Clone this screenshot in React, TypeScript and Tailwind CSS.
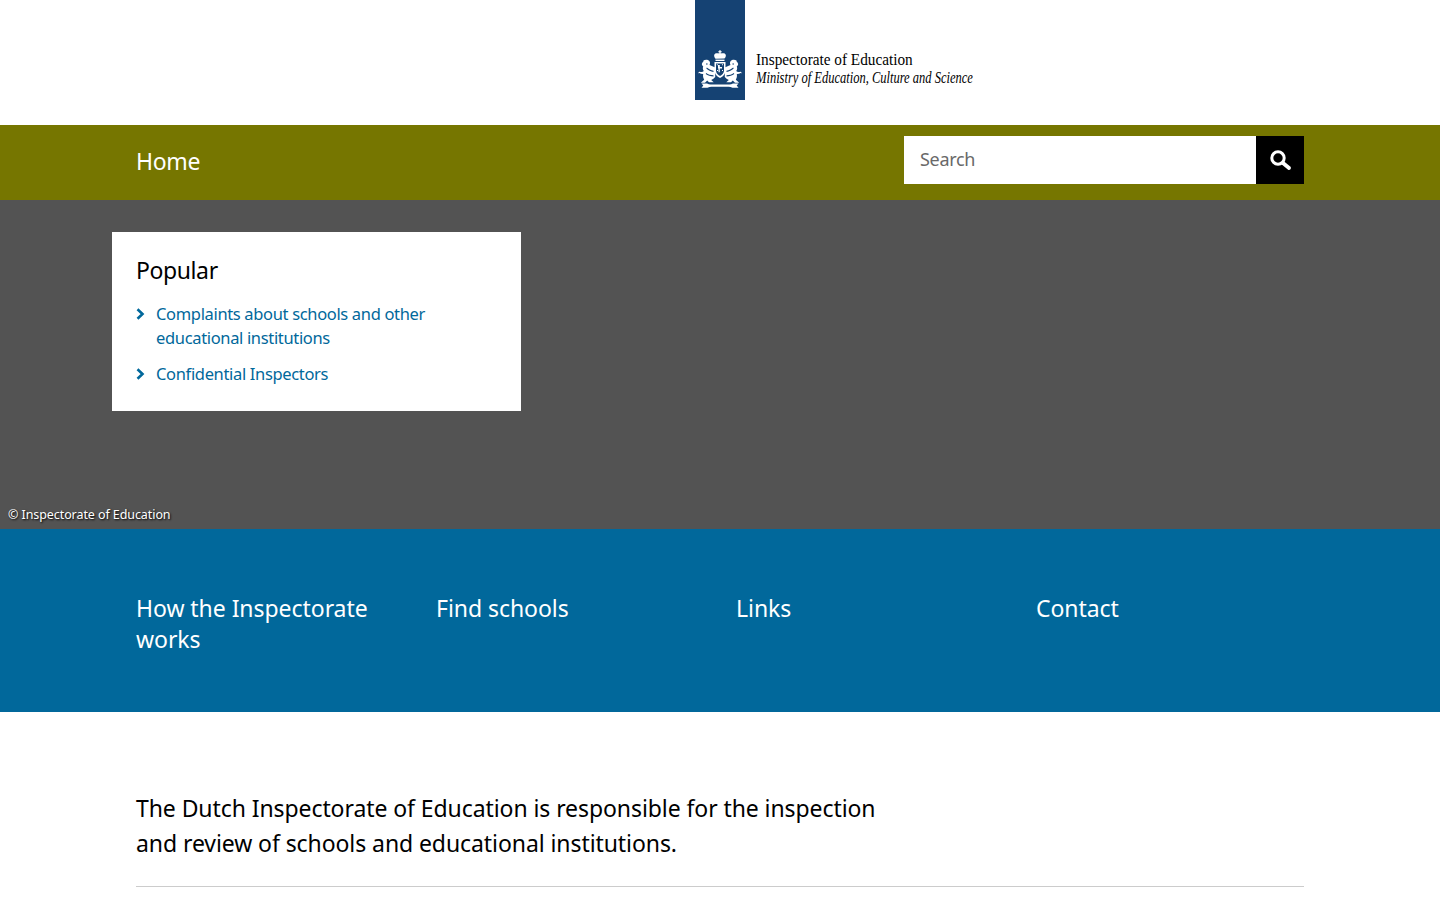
const sans = { fontFamily: '"Noto Sans", sans-serif' }

function Lion() {
  return (
    <>
      <path d="M5.500 10.500c1.800-1.200 4.500-1 5.800.5 1 1.200.9 2.700.2 3.900 2 .8 3.900 1.700 5.700 2.600v9.500c-1 1.300-2.400 2.300-4 3l2.500 2.200H11l-1.800-1.700L7 32.700H2.800l3.400-3c-1.100-1.800-1.400-3.700-1-5.700-1.300.1-2.700-.2-3.800-1L0 23.300l1.200-1.600 1.600.3c1.300.2 2.300-.2 3-1-1-1.500-1.300-3-.6-4.500-.9-.7-1.500-1.700-1.300-2.700.2-1 .8-1.700 1.500-2.200z" />
      <path d="M8 13.500h1.600v1H8zM8.800 17.500c1.800 1.500 4 2.600 6.700 3.200v1.300c-2.800-.6-5.200-1.800-7.200-3.500zM8.200 23c2 1.400 4.400 2.200 7.300 2.300v1.300c-3.100-.1-5.700-1-7.800-2.500z" fill="#154273" />
    </>
  )
}

function Crest() {
  return (
    <svg width="44" height="38" viewBox="0 0 44 38" fill="#fff" aria-hidden="true">
      {/* crown */}
      <path d="M17.500 8.800c-1.700-2-1.900-4.300-.2-5.200 1.400-.7 2.900-.4 4-.1V2.200h-1V1.200h1V.2h1.400v1h1v1h-1v1.300c1.100-.3 2.600-.6 4-.1 1.700.9 1.500 3.200-.2 5.200z" />
      <rect x="17.500" y="9.600" width="9" height="1.400" />
      {/* shield */}
      <path d="M16.500 12h11v8.500c0 3.400-2.300 5.900-5.500 7.500-3.200-1.600-5.500-4.100-5.500-7.500z" />
      <path d="M18 13.400h8v7c0 2.500-1.700 4.300-4 5.600-2.300-1.300-4-3.100-4-5.600z" fill="#154273" />
      <path d="M20 15h1.800v2h2.200v1.500h-2.200v3.800h-1.300v-3.800H20zM18.800 14.200h1v1h-1zM24 14.200h1v1h-1zM24 20h1v1h-1zM19 20h1v1h-1z" />
      <Lion />
      <g transform="matrix(-1 0 0 1 44 0)">
        <Lion />
      </g>
      {/* ribbon */}
      <path d="M3.500 33.500h5.500c1.500.9 3 1.200 4.500 1h17c1.500.2 3-.1 4.500-1h5.500l-1.800 2 1.800 2.300h-6c-1.500-.8-3-1.100-4.500-1h-16c-1.500-.1-3 .2-4.500 1h-6l1.800-2.300z" />
    </svg>
  )
}

function SearchIcon() {
  return (
    <svg width="24" height="24" viewBox="0 0 24 24" fill="none" stroke="#fff" aria-hidden="true">
      <circle cx="10" cy="10" r="6.200" strokeWidth="3" />
      <path d="M15 15l6 5" strokeWidth="3.800" strokeLinecap="round" />
    </svg>
  )
}

function Chevron() {
  return (
    <svg width="9" height="12" viewBox="0 0 9 12" fill="none" stroke="#01689b" strokeWidth="2.600" className="mt-[6px] shrink-0" aria-hidden="true">
      <path d="M1.500 1.200L6.500 6l-5 4.800" />
    </svg>
  )
}

const popular = ['Complaints about schools and other educational institutions', 'Confidential Inspectors']
const columns = ['How the Inspectorate works', 'Find schools', 'Links', 'Contact']

export default function App() {
  return (
    <div className="bg-white min-h-[900px] overflow-hidden" style={sans}>
      <header className="grid grid-cols-[1fr_50px_1fr] h-[125px]">
        <div />
        <div className="h-[100px] bg-[#154273] flex items-end justify-center pb-[12px]">
          <Crest />
        </div>
        <div className="h-[100px] pl-[11px] pt-[51px] text-black whitespace-nowrap" style={{ fontFamily: '"Liberation Serif", serif' }}>
          <div className="text-[16px] leading-[18px] origin-left scale-x-[0.953]">Inspectorate of Education</div>
          <div className="text-[16px] leading-[18px] italic origin-left scale-x-[0.781]">Ministry of Education, Culture and Science</div>
        </div>
      </header>

      <nav className="bg-[#767600] h-[75px]">
        <div className="w-[1168px] mx-auto h-full flex justify-between">
          <a className="text-white text-[23px] leading-[72px] tracking-[-0.3px]">Home</a>
          <div className="flex mt-[11px] h-[48px]">
            <div className="w-[352px] bg-white pl-4 text-[18px] leading-[46px] text-[#696969] tracking-[-0.3px]">Search</div>
            <button className="w-[48px] bg-black flex items-center justify-center">
              <SearchIcon />
            </button>
          </div>
        </div>
      </nav>

      <section className="bg-[#535353] h-[329px] pt-[32px] relative">
        <div className="w-[1216px] mx-auto">
          <div className="w-[409px] h-[179px] bg-white px-6 pt-[22px]">
            <h2 className="text-[23px] leading-[32px] text-black tracking-[-0.4px]">Popular</h2>
            <ul className="mt-[16px] flex flex-col gap-[12px]">
              {popular.map((item) => (
                <li key={item} className="flex gap-[11px] text-[16.500px] leading-[24px] text-[#01689b] tracking-[-0.34px]">
                  <Chevron />
                  <a className="block">{item}</a>
                </li>
              ))}
            </ul>
          </div>
        </div>
        <span className="absolute left-2 bottom-[4px] text-[12.500px] leading-[20px] tracking-[-0.08px] text-white [text-shadow:1px_1px_2px_#000]">© Inspectorate of Education</span>
      </section>

      <section className="bg-[#01689b] h-[183px] pt-[64px]">
        <div className="w-[1168px] mx-auto grid grid-cols-[300px_300px_300px_268px]">
          {columns.map((col) => (
            <a key={col} className="block w-[268px] text-white text-[23px] leading-[31px] tracking-[-0.05px]">{col}</a>
          ))}
        </div>
      </section>

      <main className="w-[1168px] mx-auto pt-[79px]">
        <p className="text-[23px] leading-[35px] text-black w-[760px] tracking-[-0.08px]">
          The Dutch Inspectorate of Education is responsible for the inspection and review of schools and educational institutions.
        </p>
        <div className="mt-[25px] border-t border-[#cccccc]" />
      </main>
    </div>
  )
}
